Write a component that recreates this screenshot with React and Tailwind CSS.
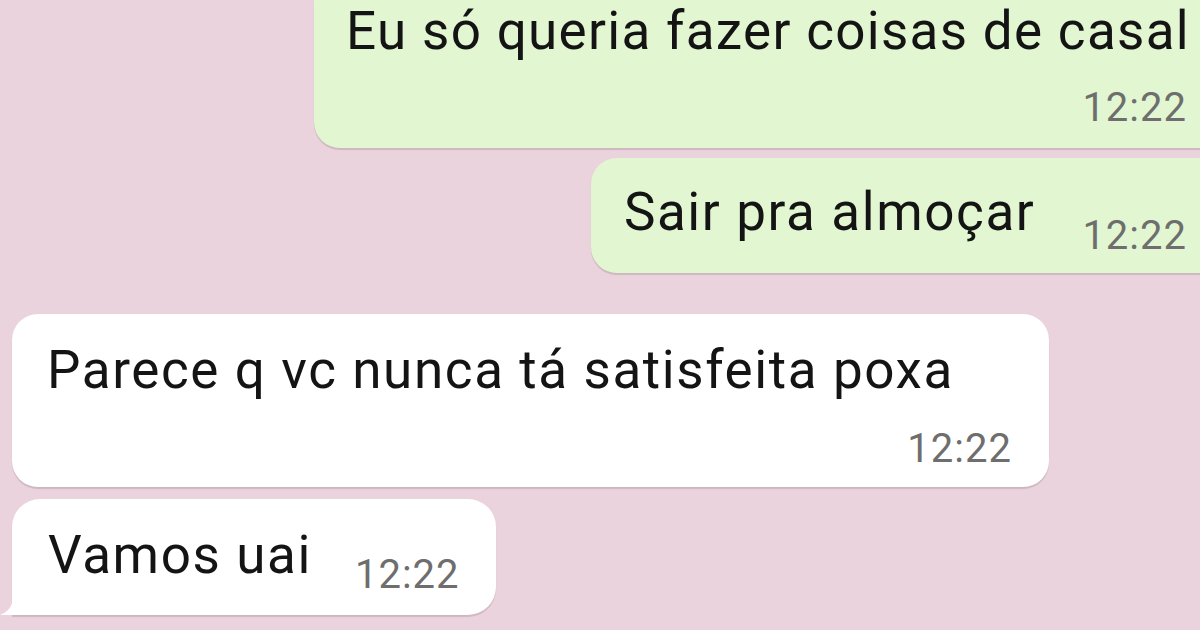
export default function App() {
  return (
    <div
      className="w-[1200px] h-[630px] overflow-hidden bg-[#ebd3dd] text-[#141414]"
      style={{ fontFamily: "Roboto, 'Noto Sans', sans-serif" }}
    >
      <div className="flex flex-col pl-[12px]">
        {/* outgoing, top of first bubble is scrolled away */}
        <div className="self-end -mr-[12px] flex flex-col bg-[#e2f7d1] rounded-bl-[26px] pl-[32px] pr-[22px] pt-[5px] pb-[20px] shadow-[0_2px_1px_rgba(0,0,0,0.13)]">
          <span className="text-[53px] leading-none tracking-[1.3px] whitespace-nowrap">Eu só queria fazer coisas de casal</span>
          <span className="self-end mr-[3px] mt-[30px] text-[40px] leading-none tracking-[1px] text-[#6e6e6e]">12:22</span>
        </div>

        <div className="self-end -mr-[12px] mt-[10px] flex items-start bg-[#e2f7d1] rounded-l-[26px] pl-[33px] pr-[25px] pt-[28px] pb-[17px] shadow-[0_2px_1px_rgba(0,0,0,0.13)]">
          <span className="text-[53px] leading-none tracking-[1.6px] whitespace-nowrap">Sair pra almoçar</span>
          <span className="ml-[47px] mt-[30px] text-[40px] leading-none tracking-[1px] text-[#6e6e6e]">12:22</span>
        </div>

        {/* incoming */}
        <div className="self-start mt-[41px] flex flex-col bg-white rounded-[26px] pl-[35px] pr-[37px] pt-[30px] pb-[18px] shadow-[0_2px_1px_rgba(0,0,0,0.13)]">
          <span className="mr-[58px] text-[53px] leading-none tracking-[1.6px] whitespace-nowrap">Parece q vc nunca tá satisfeita poxa</span>
          <span className="self-end mt-[32px] text-[40px] leading-none tracking-[1px] text-[#6e6e6e]">12:22</span>
        </div>

        <div className="relative self-start mt-[12px] flex items-start bg-white rounded-[28px] rounded-bl-none pl-[36px] pr-[36px] pt-[30px] pb-[20px] shadow-[0_2px_1px_rgba(0,0,0,0.13)]">
          <svg className="absolute -left-[12px] bottom-0" width="24" height="30" viewBox="0 0 24 30">
            <path d="M12 0 L12 18 Q10 26 0 30 L24 30 L24 0 Z" fill="#ffffff" />
          </svg>
          <span className="text-[53px] leading-none tracking-[1.6px] whitespace-nowrap">Vamos uai</span>
          <span className="ml-[43px] mt-[26px] text-[40px] leading-none tracking-[1px] text-[#6e6e6e]">12:22</span>
        </div>
      </div>
    </div>
  );
}
